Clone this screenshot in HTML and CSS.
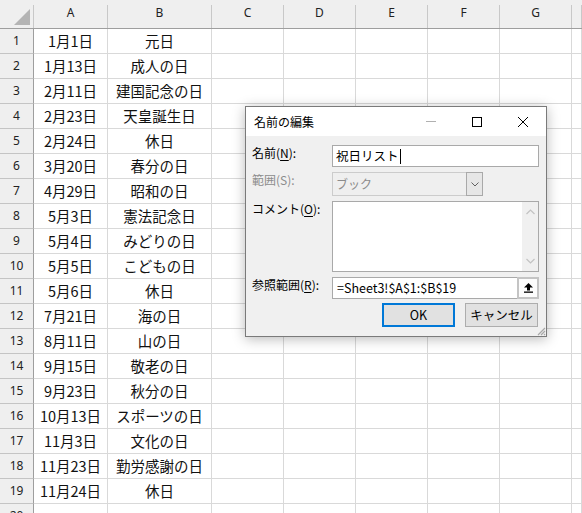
FILE: index.html
```html
<!DOCTYPE html>
<html lang="ja">
<head>
<meta charset="utf-8">
<title>名前の編集</title>
<link rel="stylesheet" href="styles.css">
</head>
<body>
<div class="sheet">
  <div class="hdr">
    <div class="w0 corner"><svg class="tri" width="16" height="16" viewBox="0 0 16 16"><polygon points="16,0 16,16 0,16" fill="#b4b4b4"/></svg></div>
    <div class="wa">A</div><div class="wb">B</div><div class="wc">C</div><div class="wc">D</div><div class="wc">E</div><div class="wc">F</div><div class="wc">G</div><div class="wh"></div>
  </div>
  <div class="row"><div class="rh">1</div><div class="c wa">1月1日</div><div class="c wb">元日</div><div class="c wc"></div><div class="c wc"></div><div class="c wc"></div><div class="c wc"></div><div class="c wc"></div><div class="c wh"></div></div>
  <div class="row"><div class="rh">2</div><div class="c wa">1月13日</div><div class="c wb">成人の日</div><div class="c wc"></div><div class="c wc"></div><div class="c wc"></div><div class="c wc"></div><div class="c wc"></div><div class="c wh"></div></div>
  <div class="row"><div class="rh">3</div><div class="c wa">2月11日</div><div class="c wb">建国記念の日</div><div class="c wc"></div><div class="c wc"></div><div class="c wc"></div><div class="c wc"></div><div class="c wc"></div><div class="c wh"></div></div>
  <div class="row"><div class="rh">4</div><div class="c wa">2月23日</div><div class="c wb">天皇誕生日</div><div class="c wc"></div><div class="c wc"></div><div class="c wc"></div><div class="c wc"></div><div class="c wc"></div><div class="c wh"></div></div>
  <div class="row"><div class="rh">5</div><div class="c wa">2月24日</div><div class="c wb">休日</div><div class="c wc"></div><div class="c wc"></div><div class="c wc"></div><div class="c wc"></div><div class="c wc"></div><div class="c wh"></div></div>
  <div class="row"><div class="rh">6</div><div class="c wa">3月20日</div><div class="c wb">春分の日</div><div class="c wc"></div><div class="c wc"></div><div class="c wc"></div><div class="c wc"></div><div class="c wc"></div><div class="c wh"></div></div>
  <div class="row"><div class="rh">7</div><div class="c wa">4月29日</div><div class="c wb">昭和の日</div><div class="c wc"></div><div class="c wc"></div><div class="c wc"></div><div class="c wc"></div><div class="c wc"></div><div class="c wh"></div></div>
  <div class="row"><div class="rh">8</div><div class="c wa">5月3日</div><div class="c wb">憲法記念日</div><div class="c wc"></div><div class="c wc"></div><div class="c wc"></div><div class="c wc"></div><div class="c wc"></div><div class="c wh"></div></div>
  <div class="row"><div class="rh">9</div><div class="c wa">5月4日</div><div class="c wb">みどりの日</div><div class="c wc"></div><div class="c wc"></div><div class="c wc"></div><div class="c wc"></div><div class="c wc"></div><div class="c wh"></div></div>
  <div class="row"><div class="rh">10</div><div class="c wa">5月5日</div><div class="c wb">こどもの日</div><div class="c wc"></div><div class="c wc"></div><div class="c wc"></div><div class="c wc"></div><div class="c wc"></div><div class="c wh"></div></div>
  <div class="row"><div class="rh">11</div><div class="c wa">5月6日</div><div class="c wb">休日</div><div class="c wc"></div><div class="c wc"></div><div class="c wc"></div><div class="c wc"></div><div class="c wc"></div><div class="c wh"></div></div>
  <div class="row"><div class="rh">12</div><div class="c wa">7月21日</div><div class="c wb">海の日</div><div class="c wc"></div><div class="c wc"></div><div class="c wc"></div><div class="c wc"></div><div class="c wc"></div><div class="c wh"></div></div>
  <div class="row"><div class="rh">13</div><div class="c wa">8月11日</div><div class="c wb">山の日</div><div class="c wc"></div><div class="c wc"></div><div class="c wc"></div><div class="c wc"></div><div class="c wc"></div><div class="c wh"></div></div>
  <div class="row"><div class="rh">14</div><div class="c wa">9月15日</div><div class="c wb">敬老の日</div><div class="c wc"></div><div class="c wc"></div><div class="c wc"></div><div class="c wc"></div><div class="c wc"></div><div class="c wh"></div></div>
  <div class="row"><div class="rh">15</div><div class="c wa">9月23日</div><div class="c wb">秋分の日</div><div class="c wc"></div><div class="c wc"></div><div class="c wc"></div><div class="c wc"></div><div class="c wc"></div><div class="c wh"></div></div>
  <div class="row"><div class="rh">16</div><div class="c wa">10月13日</div><div class="c wb">スポーツの日</div><div class="c wc"></div><div class="c wc"></div><div class="c wc"></div><div class="c wc"></div><div class="c wc"></div><div class="c wh"></div></div>
  <div class="row"><div class="rh">17</div><div class="c wa">11月3日</div><div class="c wb">文化の日</div><div class="c wc"></div><div class="c wc"></div><div class="c wc"></div><div class="c wc"></div><div class="c wc"></div><div class="c wh"></div></div>
  <div class="row"><div class="rh">18</div><div class="c wa">11月23日</div><div class="c wb">勤労感謝の日</div><div class="c wc"></div><div class="c wc"></div><div class="c wc"></div><div class="c wc"></div><div class="c wc"></div><div class="c wh"></div></div>
  <div class="row"><div class="rh">19</div><div class="c wa">11月24日</div><div class="c wb">休日</div><div class="c wc"></div><div class="c wc"></div><div class="c wc"></div><div class="c wc"></div><div class="c wc"></div><div class="c wh"></div></div>
  <div class="row"><div class="rh">20</div><div class="c wa"></div><div class="c wb"></div><div class="c wc"></div><div class="c wc"></div><div class="c wc"></div><div class="c wc"></div><div class="c wc"></div><div class="c wh"></div></div>
</div>

<div class="dialog">
  <div class="titlebar">
    <span class="title">名前の編集</span>
    <div class="caps">
      <span class="cap"><svg width="10" height="10" viewBox="0 0 10 10"><line x1="0" y1="4.5" x2="10" y2="4.5" stroke="#b0b0b0" stroke-width="1"/></svg></span>
      <span class="cap"><svg width="10" height="10" viewBox="0 0 10 10"><rect x="0.5" y="0.5" width="9" height="9" fill="none" stroke="#000" stroke-width="1"/></svg></span>
      <span class="cap"><svg width="10" height="10" viewBox="0 0 10 10"><path d="M0 0 L10 10 M10 0 L0 10" stroke="#000" stroke-width="1"/></svg></span>
    </div>
  </div>
  <div class="body">
    <div class="form">
      <span class="lbl">名前(<u>N</u>):</span>
      <div class="field input">祝日リスト<span class="caret"></span></div>
      <span class="lbl dis">範囲(S):</span>
      <div class="field combo"><span class="ctext">ブック</span><span class="ddbtn"><svg width="8" height="5" viewBox="0 0 8 5"><path d="M0.5 0.5 L4 4 L7.5 0.5" fill="none" stroke="#606060" stroke-width="1"/></svg></span></div>
      <span class="lbl">コメント(<u>O</u>):</span>
      <div class="field textarea">
        <div class="sb">
          <svg width="9" height="6" viewBox="0 0 9 6"><path d="M0.5 5 L4.5 1 L8.5 5" fill="none" stroke="#c2c2c2" stroke-width="1.2"/></svg>
          <svg width="9" height="6" viewBox="0 0 9 6"><path d="M0.5 1 L4.5 5 L8.5 1" fill="none" stroke="#c2c2c2" stroke-width="1.2"/></svg>
        </div>
      </div>
      <span class="lbl">参照範囲(<u>R</u>):</span>
      <div class="refrow">
        <div class="field input ref">=Sheet3!$A$1:$B$19</div>
        <div class="refbtn"><svg width="9" height="10" viewBox="0 0 9 10"><polygon points="4.5,0 0,4.5 9,4.5" fill="#000"/><rect x="3" y="4" width="3" height="3.5" fill="#000"/><rect x="0" y="8.5" width="9" height="1.3" fill="#000"/></svg></div>
      </div>
    </div>
    <div class="buttons">
      <button class="btn ok">OK</button>
      <button class="btn">キャンセル</button>
    </div>
  </div>
  <svg class="grip" width="10" height="10" viewBox="0 0 10 10"><path d="M9 2 L2 9 M9 5 L5 9 M9 8 L8 9" stroke="#a8a8a8" stroke-width="1.2"/></svg>
</div>
</body>
</html>
```

FILE: styles.css
```css
html, body {
  margin: 0;
  padding: 0;
}
body {
  width: 582px;
  height: 513px;
  overflow: hidden;
  position: relative;
  background: #ffffff;
  font-family: "Noto Sans CJK JP", "Noto Sans", sans-serif;
  color: #000;
}

/* ---------- spreadsheet ---------- */
.sheet {
  width: 582px;
  height: 513px;
  overflow: hidden;
}
.hdr {
  display: flex;
  height: 29px;
  box-sizing: border-box;
  padding-top: 5px;
  background: #efefef;
  border-bottom: 1px solid #9e9e9e;
}
.hdr > div {
  flex: none;
  height: 23px;
  box-sizing: border-box;
  border-right: 1px solid #c8c8c8;
  text-align: center;
  line-height: 16px;
  font-family: "Noto Sans", sans-serif;
  font-size: 12px;
  color: #222;
}
.corner {
  display: flex;
  justify-content: flex-end;
  align-items: flex-end;
  padding: 0 3px 3px 0;
}
.tri {
  display: block;
}
.w0 { width: 34px; }
.wa { width: 74px; }
.wb { width: 104px; }
.wc { width: 72px; }
.hdr > .wh, .row > .wh { flex: 1 0 10px; width: auto; }

.row {
  display: flex;
  height: 25px;
}
.rh {
  flex: none;
  width: 34px;
  height: 25px;
  box-sizing: border-box;
  background: #efefef;
  border-right: 1px solid #9e9e9e;
  border-bottom: 1px solid #c4c4c4;
  text-align: center;
  line-height: 24px;
  font-family: "Noto Sans", sans-serif;
  font-size: 12px;
  color: #222;
}
.c {
  flex: none;
  height: 25px;
  box-sizing: border-box;
  border-right: 1px solid #d9d9d9;
  border-bottom: 1px solid #d9d9d9;
  text-align: center;
  line-height: 24px;
  font-size: 14.5px;
  white-space: nowrap;
  overflow: hidden;
  color: #111;
}

/* ---------- dialog ---------- */
.dialog {
  position: absolute;
  left: 245px;
  top: 106px;
  width: 302px;
  height: 231px;
  box-sizing: border-box;
  border: 1px solid #7a7a7a;
  background: #f0f0f0;
  box-shadow: 0 2px 12px rgba(0, 0, 0, 0.28);
  font-size: 12px;
}
.titlebar {
  display: flex;
  align-items: center;
  height: 29px;
  background: #ffffff;
}
.title {
  padding-left: 8px;
  line-height: 16px;
  font-size: 12px;
  color: #000;
}
.caps {
  margin-left: auto;
  display: flex;
}
.cap {
  width: 46px;
  height: 29px;
  display: flex;
  align-items: center;
  justify-content: center;
}
.cap svg {
  display: block;
}
.body {
  padding: 9px 7px 0 6px;
}
.form {
  display: grid;
  grid-template-columns: 80px 1fr;
  grid-template-rows: 22px 24px 71px 22px;
  row-gap: 5px;
}
.lbl {
  align-self: start;
  line-height: 16px;
  font-size: 12px;
  white-space: nowrap;
}
.lbl u {
  text-decoration-thickness: 1px;
  text-underline-offset: 2px;
}
.lbl.dis {
  color: #8c8c8c;
}
.field {
  box-sizing: border-box;
  border: 1px solid #a9a9a9;
  background: #ffffff;
}
.input {
  display: flex;
  align-items: center;
  height: 22px;
  padding-left: 3px;
  font-size: 12.5px;
  line-height: 20px;
  white-space: nowrap;
}
.caret {
  display: inline-block;
  width: 1px;
  height: 15px;
  margin-left: 1px;
  background: #000;
}
.combo {
  display: flex;
  height: 24px;
  width: 151px;
  background: #efefef;
  border-color: #cccccc;
}
.ctext {
  flex: 1;
  padding-left: 3px;
  line-height: 22px;
  font-size: 12px;
  color: #8c8c8c;
}
.ddbtn {
  width: 17px;
  margin: -1px -1px -1px 0;
  box-sizing: border-box;
  border: 1px solid #a9a9a9;
  background: #e6e6e6;
  display: flex;
  align-items: center;
  justify-content: center;
}
.textarea {
  display: flex;
  justify-content: flex-end;
  padding: 0;
}
.sb {
  width: 16px;
  background: #f0f0f0;
  display: flex;
  flex-direction: column;
  align-items: center;
  justify-content: space-between;
  padding: 7px 0 7px;
}
.sb svg {
  display: block;
}
.refrow {
  display: flex;
  height: 22px;
}
.ref {
  flex: 1;
  padding-left: 4px;
  border-right: none;
}
.refbtn {
  width: 22px;
  height: 22px;
  box-sizing: border-box;
  border: 2px solid #c4c4c4;
  background: #fcfcfc;
  display: flex;
  align-items: center;
  justify-content: center;
}
.refbtn svg {
  display: block;
}
.buttons {
  display: flex;
  justify-content: flex-end;
  gap: 10px;
  margin-top: 4px;
  margin-right: 1px;
}
.btn {
  width: 73px;
  height: 24px;
  box-sizing: border-box;
  border: 1px solid #adadad;
  background: #e1e1e1;
  font-family: "Noto Sans CJK JP", "Noto Sans", sans-serif;
  font-size: 12.5px;
  color: #000;
  padding: 0;
  line-height: 20px;
}
.btn.ok {
  border: 2px solid #0078d7;
}
.grip {
  position: absolute;
  right: 0;
  bottom: 0;
  display: block;
}
```
